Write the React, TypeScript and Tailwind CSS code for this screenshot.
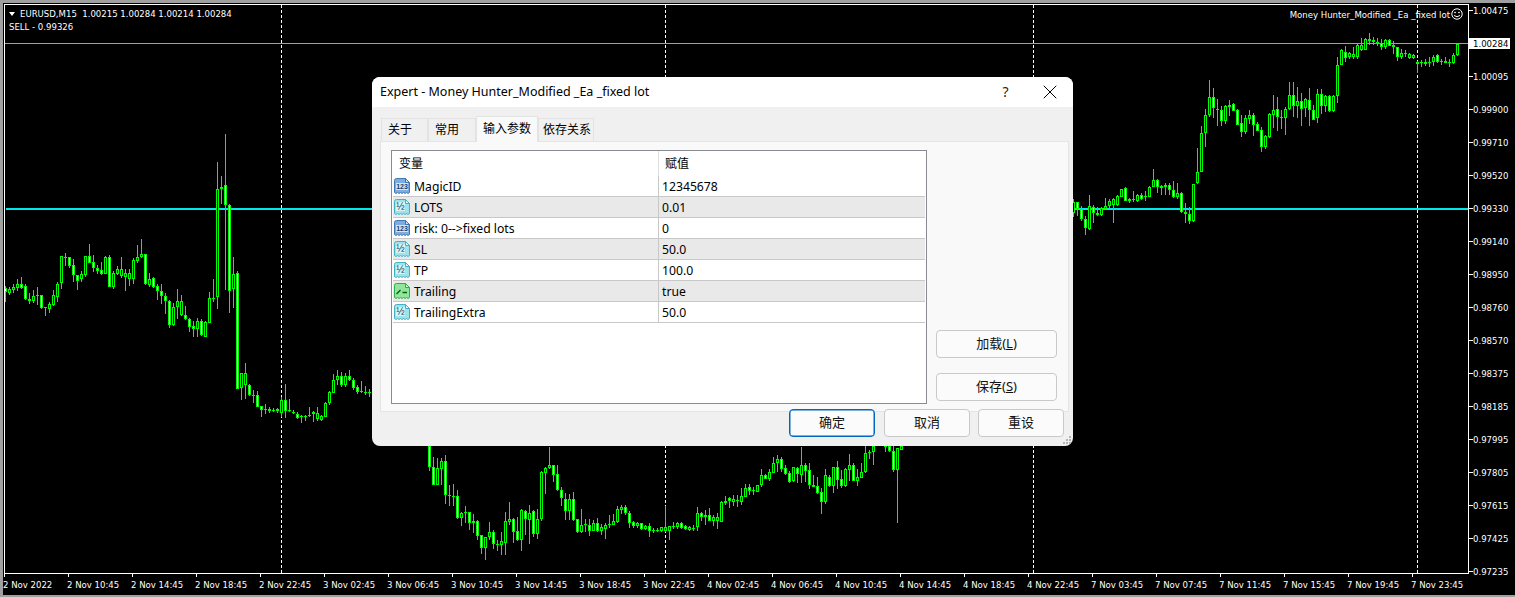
import type { ReactNode } from 'react';
import { X } from 'lucide-react';

// candle columns read off the chart: x, body top, body bottom, wick top, wick bottom, white fill
const leftCandles = '16 475 487 468 515 1,28 478 488 472 494 0,40 472 480 462 490 0,52 462 474 448 484 0,64 462 474 442 476 1,76 468 508 462 510 1,88 508 512 490 522 1,100 498 512 480 518 0,112 495 497 472 526 0,124 496 534 494 536 1,136 532 535 530 557 0,148 522 536 517 548 0,160 496 524 480 528 0,172 462 500 456 516 0,184 379 460 379 476 0,196 381 383 370 408 0,208 382 408 380 414 1,220 406 436 388 456 1,232 436 452 436 480 1,244 432 448 424 456 0,256 379 436 379 442 0,268 379 398 343 400 1,280 397 415 376 426 1,292 415 423 406 432 1,304 421 431 396 436 1,316 381 431 378 432 0,328 382 470 376 472 1,340 430 470 422 476 0,352 418 431 408 436 0,364 418 437 381 444 0,376 430 441 418 483 0,388 430 446 418 468 0,400 391 446 384 462 0,412 382 392 346 398 0,424 373 381 327 383 0,436 371 461 371 464 1,448 448 466 428 470 0,460 445 470 440 474 1,472 469 483 462 510 1,484 484 497 462 522 1,496 497 512 490 552 1,508 512 586 510 593 1,520 532 584 520 588 0,532 514 532 478 568 0,544 514 554 495 558 0,556 556 566 528 570 1,568 566 590 564 606 1,580 588 596 574 622 1,592 574 598 564 620 0,604 574 616 568 618 1,616 576 620 574 620 0,628 505 578 487 580 0,640 503 507 448 516 0,652 178 502 97 536 0,664 170 176 138 222 1,676 166 224 12 480 1,688 224 482 222 548 1,700 432 478 382 534 0,712 430 776 424 778 1,724 730 773 730 810 0,736 730 764 700 808 0,748 764 796 762 798 1,760 796 798 780 818 0,772 796 830 784 832 1,784 829 839 827 860 1,796 836 838 822 852 0,808 838 842 832 848 0,820 840 844 834 846 0,832 838 842 834 848 0,844 810 850 802 862 0,856 811 842 762 864 1,868 841 843 808 846 0,880 845 848 840 852 0,892 851 863 846 866 1,904 858 862 856 878 0,916 858 860 856 874 0,928 856 858 830 860 0,940 845 853 843 876 0,952 848 868 830 874 0,964 859 869 855 872 0,976 818 860 816 862 0,988 787 818 782 824 0,1000 751 788 732 790 0,1012 739 751 720 764 0,1024 739 766 726 772 1,1036 738 766 730 770 0,1048 737 749 720 752 1,1060 749 775 745 780 1,1072 772 785 765 792 1,1084 784 786 752 790 0,1096 785 789 768 795 0,1108 786 788 776 800 0';

const bottomCandles = '28 18 82 18 92 1,40 80 134 52 136 1,52 84 134 55 136 0,64 64 86 55 136 0,76 64 166 45 192 1,88 165 167 135 197 0,100 169 171 132 197 0,112 169 233 150 236 1,124 220 233 215 258 0,136 217 219 198 250 0,148 217 250 216 270 1,160 244 248 222 278 0,172 244 287 240 300 1,184 286 323 284 342 1,196 290 323 290 360 0,208 277 291 247 300 0,220 277 311 270 326 1,232 312 314 300 332 0,244 304 315 276 344 0,256 244 308 216 345 0,268 238 246 186 255 0,280 238 276 234 308 1,292 274 300 232 302 1,304 210 299 208 333 0,316 214 237 210 285 1,328 220 240 195 312 0,340 214 282 211 292 1,352 238 282 208 297 0,364 96 236 92 242 0,376 84 98 80 162 0,388 76 84 22 88 0,400 76 104 74 126 1,412 103 150 75 152 1,424 151 173 142 198 1,436 176 212 160 240 1,448 178 212 163 240 0,460 178 240 155 242 1,472 238 275 236 278 1,484 256 275 208 278 0,496 253 256 238 276 0,508 256 272 238 288 1,520 250 272 240 274 0,532 250 272 234 276 1,544 262 272 252 284 0,556 256 266 250 297 0,568 253 255 225 263 0,580 244 254 222 256 0,592 208 246 198 250 0,604 202 210 195 222 0,616 202 218 195 224 1,628 218 248 212 264 1,640 247 257 242 264 1,652 249 257 247 264 0,664 250 266 248 270 1,676 259 267 254 270 0,688 259 272 250 290 1,700 270 272 265 278 0,712 270 272 264 276 0,724 262 272 260 276 0,736 260 272 198 276 0,748 259 272 257 300 0,760 259 261 246 266 0,772 250 262 246 266 0,784 250 264 246 267 1,796 259 267 254 270 1,808 262 270 258 272 0,820 263 265 255 272 0,832 220 260 202 272 0,844 220 230 216 244 1,856 226 230 210 256 0,868 226 242 204 244 1,880 230 242 224 258 0,892 232 242 218 266 0,904 187 245 182 246 0,916 184 188 168 196 0,928 175 183 172 204 1,940 178 185 165 198 0,952 180 184 166 202 0,964 169 185 144 195 0,976 145 170 132 172 0,988 142 152 132 164 1,1000 150 153 142 165 0,1012 136 155 136 156 0,1024 106 136 88 140 0,1036 106 116 102 118 1,1048 97 117 88 124 0,1060 68 98 52 100 0,1072 58 68 45 95 0,1084 58 86 52 96 1,1096 85 101 76 105 1,1108 100 125 92 128 1,1120 82 124 80 126 0,1132 85 101 80 128 1,1144 76 104 20 130 0,1156 76 92 70 125 1,1168 91 134 70 148 1,1180 134 140 105 142 1,1192 139 158 110 162 1,1204 157 185 145 222 1,1216 106 186 86 192 0,1228 110 138 104 140 1,1240 82 137 82 160 0,1252 82 120 64 148 1,1264 118 137 90 145 1,1276 88 138 84 140 0,1288 76 90 42 122 0,1300 76 122 68 124 1,1312 112 122 88 138 0,1324 97 113 70 115 0,1336 40 96 18 98 0,1348 37 40 30 58 0,1360 18 36 18 74 0,1396 18 20 18 35 0,1408 18 32 18 36 1,1420 32 90 18 95 1,1432 25 90 25 250 0,1444 18 30 18 30 0';

const rightCandles = '10 515 550 508 560 0,22 517 538 517 558 1,34 536 568 528 572 1,46 568 595 558 616 1,58 527 596 495 600 0,70 530 550 525 580 1,82 550 555 530 558 0,94 534 556 530 558 0,106 527 538 505 540 0,118 512 528 508 536 0,130 508 526 505 578 0,142 498 526 496 528 0,154 478 500 476 502 0,166 475 512 472 514 1,178 508 514 504 520 1,190 508 510 484 516 0,202 496 512 492 516 0,214 496 506 488 510 1,226 499 501 484 512 0,238 470 500 468 502 0,250 451 470 418 472 0,262 451 472 448 488 1,274 469 475 465 496 1,286 466 470 458 495 0,298 466 480 460 494 1,310 481 502 454 504 1,322 490 500 460 506 0,334 488 545 486 550 1,346 545 553 520 580 1,358 553 572 530 582 1,370 463 572 462 575 0,382 425 460 355 462 0,394 310 425 288 426 0,406 256 310 238 352 0,418 202 256 150 262 0,430 202 235 175 264 1,442 238 240 208 288 0,454 241 272 228 288 1,466 229 272 226 282 0,478 226 230 210 258 0,490 223 242 220 244 1,502 241 284 238 286 1,514 280 305 256 321 1,526 265 305 255 312 0,538 256 266 240 282 0,550 256 284 250 318 1,562 283 302 275 304 1,574 301 350 290 366 1,586 319 351 316 356 0,598 252 320 250 325 0,610 241 255 195 295 0,622 238 262 202 303 1,634 261 263 240 296 0,646 238 263 232 314 0,658 196 238 156 240 0,670 196 227 156 262 1,682 214 228 172 264 0,694 214 236 190 288 1,706 208 234 204 262 0,718 211 241 175 288 1,730 241 269 226 270 1,742 193 265 176 280 0,754 193 227 176 252 1,766 199 228 195 245 0,778 199 242 196 245 1,790 199 242 196 246 0,802 106 199 80 218 0,814 61 104 58 106 0,826 65 83 48 96 1,838 70 82 66 88 0,850 72 80 52 86 0,862 46 80 42 88 0,874 46 60 24 62 0,886 28 60 24 60 0,898 28 34 10 44 1,910 30 36 20 44 1,922 36 38 24 48 0,934 38 50 26 60 1,946 31 50 28 58 0,958 31 47 27 48 1,970 46 52 34 72 1,982 52 82 50 92 1,994 70 80 58 88 0,1006 70 72 60 80 0,1018 73 83 68 86 0,1030 76 84 72 86 0,1042 97 103 94 128 0,1054 95 97 90 112 0,1066 97 103 88 108 0,1078 95 98 82 110 0,1090 80 95 74 108 0,1102 76 95 72 98 1,1114 92 95 88 106 0,1126 94 98 82 98 1,1138 95 97 88 110 0,1150 76 98 70 102 0,1162 41 76 40 78 0';

const parse = (src: string, ox: number, oy: number) =>
  src.split(',').map((c) => {
    const [zx, top, bot, wt, wb, white] = c.split(' ').map(Number);
    return {
      x: 5 + 4 * Math.round((ox + zx / 3 - 5) / 4),
      top: Math.round(oy + top / 3),
      bot: Math.round(oy + bot / 3),
      wt: Math.round(oy + wt / 3),
      wb: Math.round(oy + wb / 3),
      white: white === 1,
    };
  });

const candles = [
  ...parse(leftCandles, 0, 130),
  ...parse(bottomCandles, 420, 440),
  ...parse(rightCandles, 1070, 30),
];

const prices = ['1.00475', '1.00284', '1.00095', '0.99900', '0.99710', '0.99520', '0.99330', '0.99140', '0.98950', '0.98760', '0.98570', '0.98375', '0.98185', '0.97995', '0.97805', '0.97615', '0.97425', '0.97235'];

const times = ['2 Nov 2022', '2 Nov 10:45', '2 Nov 14:45', '2 Nov 18:45', '2 Nov 22:45', '3 Nov 02:45', '3 Nov 06:45', '3 Nov 10:45', '3 Nov 14:45', '3 Nov 18:45', '3 Nov 22:45', '4 Nov 02:45', '4 Nov 06:45', '4 Nov 10:45', '4 Nov 14:45', '4 Nov 18:45', '4 Nov 22:45', '7 Nov 03:45', '7 Nov 07:45', '7 Nov 11:45', '7 Nov 15:45', '7 Nov 19:45', '7 Nov 23:45'];

const params = [
  { name: 'MagicID', value: '12345678', type: 'int' },
  { name: 'LOTS', value: '0.01', type: 'double' },
  { name: 'risk: 0-->fixed lots', value: '0', type: 'int' },
  { name: 'SL', value: '50.0', type: 'double' },
  { name: 'TP', value: '100.0', type: 'double' },
  { name: 'Trailing', value: 'true', type: 'bool' },
  { name: 'TrailingExtra', value: '50.0', type: 'double' },
];

const iconColors: Record<string, { fill: string; stroke: string; fold: string }> = {
  int: { fill: '#7fabdd', stroke: '#3a78b8', fold: '#c9def3' },
  double: { fill: '#9fe3ea', stroke: '#45b0c2', fold: '#e2f8fa' },
  bool: { fill: '#8fe79a', stroke: '#35a850', fold: '#d9f8dc' },
};

const ParamIcon = ({ type }: { type: string }) => {
  const c = iconColors[type];
  return (
    <svg width="16" height="16" viewBox="0 0 16 16" className="shrink-0">
      <path
        d="M0.5 2.5 Q0.5 0.5 2.5 0.5 H11.5 L15.5 4.5 V14.5 L14 15.5 L12.5 14.5 L11 15.5 L9.5 14.5 L8 15.5 L6.5 14.5 L5 15.5 L3.5 14.5 L2 15.5 L0.5 14.5 Z"
        fill={c.fill}
        stroke={c.stroke}
      />
      <path d="M11.5 0.5 V4.5 H15.5 Z" fill={c.fold} stroke={c.stroke} />
      {type === 'bool' && <path d="M2.5 11 L6.5 7 M8.5 9.5 H13" stroke="#0c5a20" strokeWidth="1.4" fill="none" />}
      {type === 'int' && (
        <>
          <rect x="2" y="5" width="12" height="7" fill="#d5e5f6" />
          <text x="8" y="11.2" textAnchor="middle" fontSize="7" fontWeight="700" fontFamily="Liberation Sans, sans-serif" fill="#123f70">
            123
          </text>
        </>
      )}
      {type === 'double' && (
        <>
          <rect x="2" y="3" width="9" height="9" fill="#d4f4f7" />
          <text x="6.5" y="10.8" textAnchor="middle" fontSize="10" fontFamily="Liberation Sans, sans-serif" fill="#10424e">
            ½
          </text>
        </>
      )}
    </svg>
  );
};

const DialogButton = ({ label, focused, className }: { label: ReactNode; focused?: boolean; className: string }) => (
  <div
    className={`flex items-center justify-center rounded-[4px] bg-[#fbfbfb] text-[13px] text-[#111] ${
      focused ? 'border border-[#0067c0] shadow-[inset_0_0_0_0.5px_#0067c0]' : 'border border-[#c9c9c9]'
    } ${className}`}
  >
    {label}
  </div>
);

const tabs = [
  { label: '关于', w: 'w-[47px]' },
  { label: '常用', w: 'w-[48px]' },
  { label: '输入参数', w: 'w-[62px]', active: true },
  { label: '依存关系', w: 'w-[56px]', pl: 'pl-[4px]' },
];

export default function App() {
  return (
    <div className="relative h-[597px] w-[1515px] overflow-hidden bg-[#a0a0a0] pb-[2px] pl-[3px] pt-[3px] font-['DejaVu_Sans_Condensed','Liberation_Sans',sans-serif]">
      <div className="flex h-full w-full flex-col bg-black pl-[1px] pt-[1px] text-[9.5px] leading-[11px] text-white">
        <div className="flex h-[570px] shrink-0">
          {/* chart */}
          <div className="relative h-[570px] w-[1465px] shrink-0 border border-white">
            <svg width="1463" height="568" viewBox="5 5 1463 568" className="absolute left-0 top-0" shapeRendering="crispEdges">
              {[281, 665, 1033, 1417].map((x) => (
                <line key={x} x1={x + 0.5} y1="5" x2={x + 0.5} y2="573" stroke="#ffffff" strokeDasharray="3 2" />
              ))}
              <rect x="5" y="43" width="1463" height="1" fill="#a0a0a4" />
              <rect x="6" y="208" width="1463" height="2" fill="#00e8ee" />
              {candles.map((c, i) => (
                <g key={i}>
                  <rect x={c.x} y={c.wt} width="1" height={Math.max(c.wb - c.wt, 1)} fill="#00ff00" />
                  <rect x={c.x - 1} y={c.top} width="3" height={Math.max(c.bot - c.top, 1)} fill="#00ff00" />
                  {c.bot - c.top > 2 && <rect x={c.x} y={c.top + 1} width="1" height={c.bot - c.top - 2} fill={c.white ? '#ffffff' : '#000000'} />}
                </g>
              ))}
            </svg>

            <div className="absolute left-[3px] top-[3px] flex flex-col gap-[2px] whitespace-pre">
              <div className="flex items-center">
                <span className="ml-[1px] mr-[5px] h-0 w-0 border-x-[3.5px] border-t-[4px] border-x-transparent border-t-white" />
                <span>EURUSD,M15  1.00215 1.00284 1.00214 1.00284</span>
              </div>
              <div className="ml-[1px]">SELL - 0.99326</div>
            </div>

            <div className="absolute right-[5px] top-[3px] flex items-center gap-[1px]">
              <span>Money Hunter_Modified _Ea _fixed lot</span>
              <svg width="12" height="12" viewBox="0 0 12 12" fill="none" stroke="#ffffff">
                <circle cx="6" cy="6" r="5.2" />
                <path d="M3 7.5 Q6 10 9 7.5" />
                <circle cx="4" cy="4.5" r="0.5" />
                <circle cx="8" cy="4.5" r="0.5" />
              </svg>
            </div>
          </div>

          {/* price axis */}
          <div className="flex flex-col pt-[1px]">
            {prices.map((p, i) => (
              <div key={p} className="flex h-[33px] shrink-0 items-start">
                {i === 1 ? (
                  <div className="h-[11px] w-[41px] bg-white pl-[4px] text-black">{p}</div>
                ) : (
                  <>
                    <span className="mt-[5px] h-px w-[4px] bg-white" />
                    <span>{p}</span>
                  </>
                )}
              </div>
            ))}
          </div>
        </div>

        {/* time axis */}
        <div className="flex">
          {times.map((t) => (
            <div key={t} className="w-[64px] shrink-0 whitespace-nowrap">
              <div className="h-[3px] w-px bg-white" />
              <div className="-ml-[1px] mt-[2px]">{t}</div>
            </div>
          ))}
        </div>
      </div>

      {/* dialog */}
      <div className="absolute left-[372px] top-[77px] flex h-[369px] w-[701px] flex-col overflow-hidden rounded-lg bg-[#f0f0f0] font-['Noto_Sans','Noto_Sans_CJK_SC',sans-serif] text-[12.5px] text-black">
        <div className="flex h-[30px] shrink-0 items-center bg-white pl-[8px]">
          <span className="flex-1">Expert - Money Hunter_Modified _Ea _fixed lot</span>
          <span className="ml-[2px] w-[43px] -translate-y-px text-center text-[14px] text-[#222]">?</span>
          <span className="mr-[1px] flex w-[45px] justify-center">
            <X size={24} strokeWidth={1} />
          </span>
        </div>

        <div className="flex h-[34px] shrink-0 items-end pl-[9px]">
          {tabs.map((t) => (
            <div
              key={t.label}
              className={`flex items-center border-x border-t border-[#e3e3e3] text-[12px] leading-none ${t.w} ${t.pl ?? 'pl-[6px]'} ${
                t.active ? 'relative z-10 -mb-px h-[26px] !pl-0 justify-center bg-[#f9f9f9] pb-[2px]' : 'h-[23px] justify-start bg-[#f0f0f0]'
              }`}
            >
              {t.label}
            </div>
          ))}
        </div>

        <div className="ml-[8px] mr-[4px] flex h-[271px] shrink-0 border border-[#e5e5e5] bg-[#f9f9f9] pl-[10px] pt-[8px]">
          <div className="h-[254px] w-[536px] shrink-0 border border-[#8a8a92] bg-white">
            <div className="flex h-[25px] items-center text-[12px]">
              <span className="w-[266px] pl-[7px]">变量</span>
              <span className="h-full w-px bg-[#e0e0e0]" />
              <span className="pl-[6px]">赋值</span>
            </div>
            {params.map((p, i) => (
              <div
                key={p.name}
                className={`mx-[1px] flex h-[21px] items-center border-b border-[#c8c8c8] pt-[2px] text-[12.2px] ${i % 2 === 1 ? 'bg-[#e9e9e9]' : 'bg-white'}`}
              >
                <div className="-mt-[2px] flex w-[265px] items-center gap-[4px] pl-[1px]">
                  <ParamIcon type={p.type} />
                  <span className="mt-[2px]">{p.name}</span>
                </div>
                <span className="-mt-[2px] h-[21px] w-px bg-[#c8c8c8]" />
                <span className="pl-[3px]">{p.value}</span>
              </div>
            ))}
          </div>

          <div className="ml-[9px] flex h-[254px] w-[121px] flex-col justify-end gap-[15px] pb-[3px]">
            <DialogButton label={<span>加载(<u>L</u>)</span>} className="h-[28px] w-[121px]" />
            <DialogButton label={<span>保存(<u>S</u>)</span>} className="h-[28px] w-[121px]" />
          </div>
        </div>

        <div className="relative -mt-[3px] ml-[417px] flex gap-[9px]">
          <DialogButton label="确定" focused className="h-[28px] w-[86px]" />
          <DialogButton label="取消" className="h-[28px] w-[86px]" />
          <DialogButton label="重设" className="-ml-[1px] h-[28px] w-[86px]" />
        </div>

        <svg width="9" height="9" viewBox="0 0 9 9" className="absolute bottom-[1px] right-[1px]" fill="#b5b5b5">
          <rect x="6" y="0" width="2" height="2" />
          <rect x="3" y="3" width="2" height="2" />
          <rect x="6" y="3" width="2" height="2" />
          <rect x="0" y="6" width="2" height="2" />
          <rect x="3" y="6" width="2" height="2" />
          <rect x="6" y="6" width="2" height="2" />
        </svg>
      </div>
    </div>
  );
}
